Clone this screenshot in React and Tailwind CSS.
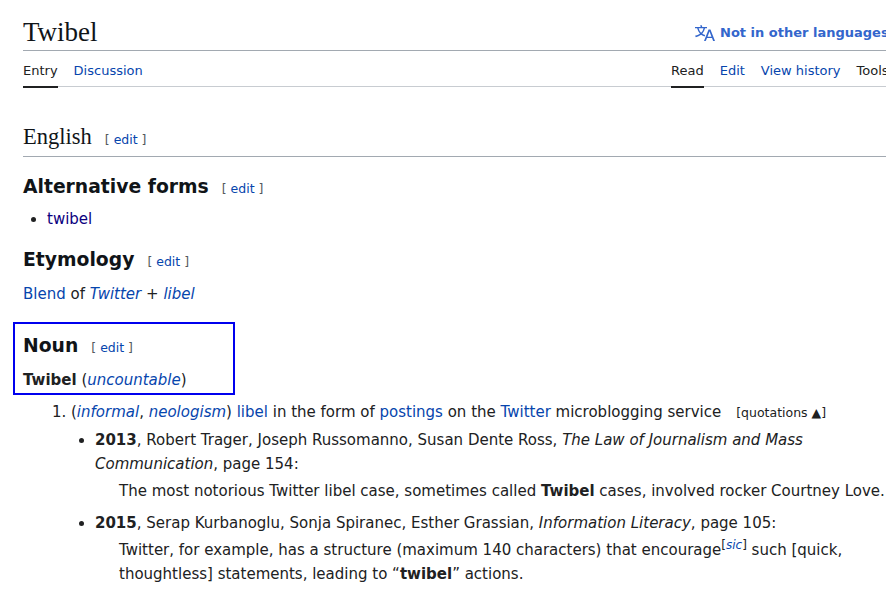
import React from "react";

const A = ({ children, className = "" }) => (
  <a href="#" className={`text-[#0645ad] ${className}`}>{children}</a>
);

const EditLink = () => (
  <span className="text-[12.5px] font-normal text-[#54595d] ml-[13px]">
    [ <A>edit</A> ]
  </span>
);

const Tab = ({ active, children }) => (
  <div className={`h-[37px] pt-[8px] text-[13px] ${active ? "border-b-2 border-[#202122] text-[#202122]" : "text-[#0645ad]"}`}>
    {children}
  </div>
);

const App = () => {
  return (
    <div className="w-[886px] h-[609px] overflow-hidden bg-white text-[#202122] pl-[23px] text-[15px] leading-[24px]" style={{ fontFamily: '"DejaVu Sans", sans-serif' }}>
      <div className="w-[900px]">
        <div className="flex justify-between items-center h-[51px] border-b border-[#a2a9b1] pt-[14px]">
          <h1 className="text-[27px] leading-[38px] text-[#101418]" style={{ fontFamily: '"Liberation Serif", serif' }}>Twibel</h1>
          <div className="flex items-center gap-[5px] text-[13px] font-bold text-[#3366cc] w-[228px] whitespace-nowrap mt-[1px]">
            <svg width="20" height="20" viewBox="0 0 20 20" fill="#3366cc">
              <path d="M20 18h-1.44a.6.6 0 0 1-.4-.12.8.8 0 0 1-.23-.31L17 15h-5l-1 2.54a.8.8 0 0 1-.22.3.6.6 0 0 1-.4.14H9l4.55-11.47h1.89zm-3.53-4.31L14.89 9.5a12 12 0 0 1-.39-1.24q-.09.37-.19.69l-.19.56-1.58 4.19zm-6.3-1.58a13.4 13.4 0 0 1-2.91-1.41 11.46 11.46 0 0 0 2.81-5.37H12V4H7.31a4 4 0 0 0-.2-.56C6.87 2.79 6.6 2 6.6 2l-1.47.5s.4.89.6 1.5H0v1.33h2.15A11.23 11.23 0 0 0 5 10.7a17.2 17.2 0 0 1-5 2.1q.56.82.87 1.38a23.3 23.3 0 0 0 5.22-2.51 15.6 15.6 0 0 0 3.56 1.77zM3.63 5.33h4.91a8.1 8.1 0 0 1-2.45 4.45 9.1 9.1 0 0 1-2.46-4.45" />
            </svg>
            <span>Not in other languages</span>
          </div>
        </div>
        <div className="flex justify-between h-[36px] border-b border-[#c8ccd1]">
          <div className="flex gap-[16px]">
            <Tab active>Entry</Tab>
            <Tab>Discussion</Tab>
          </div>
          <div className="flex gap-[16px] w-[252px] whitespace-nowrap">
            <Tab active>Read</Tab>
            <Tab>Edit</Tab>
            <Tab>View history</Tab>
            <div className="h-[37px] pt-[8px] text-[13px] text-[#202122]">Tools</div>
          </div>
        </div>

        <div className="mt-[34px] h-[36px] border-b border-[#a2a9b1] flex items-baseline">
          <h2 className="text-[22.5px] leading-[32px] text-[#101418]" style={{ fontFamily: '"Liberation Serif", serif' }}>English</h2>
          <EditLink />
        </div>

        <div className="mt-[16px] flex items-baseline h-[28px]">
          <h3 className="text-[18.75px] font-bold text-[#101418] leading-[28px]">Alternative forms</h3>
          <EditLink />
        </div>
        <ul className="mt-[6px] ml-[24px] list-disc">
          <li><a href="#" className="text-[#0b0080]">twibel</a></li>
        </ul>

        <div className="mt-[15px] flex items-baseline h-[28px]">
          <h3 className="text-[18.75px] font-bold text-[#101418] leading-[28px]">Etymology</h3>
          <EditLink />
        </div>
        <p className="mt-[8px]">
          <A>Blend</A> of <A className="italic">Twitter</A> + <A className="italic">libel</A>
        </p>
      </div>

      <div className="relative w-[900px] mt-[26px]">
        <div className="absolute left-[-10px] top-[-10px] w-[222px] h-[73px] border-2 border-[#0000ee]" />
        <div className="flex items-baseline h-[28px]">
          <h3 className="text-[18.75px] font-bold text-[#101418] leading-[28px]">Noun</h3>
          <EditLink />
        </div>
        <p className="mt-[8px]">
          <b>Twibel</b> (<A className="italic">uncountable</A>)
        </p>
        <ol className="list-decimal ml-[48px] mt-[8px]">
          <li>
            <span>(<A className="italic">informal</A>, <A className="italic">neologism</A>) <A>libel</A> in the form of <A>postings</A> on the <A>Twitter</A> microblogging service</span>
            <span className="ml-[15px] text-[12.5px]">[quotations ▲]</span>
            <ul className="list-disc ml-[24px] mt-[3px]">
              <li className="w-[730px]">
                <b>2013</b>, Robert Trager, Joseph Russomanno, Susan Dente Ross, <i>The Law of Journalism and Mass Communication</i>, page 154:
                <div className="ml-[24px] mt-[3px] whitespace-nowrap">The most notorious Twitter libel case, sometimes called <b>Twibel</b> cases, involved rocker Courtney Love.</div>
              </li>
              <li className="w-[750px] mt-[8px]">
                <b>2015</b>, Serap Kurbanoglu, Sonja Spiranec, Esther Grassian, <i>Information Literacy</i>, page 105:
                <div className="ml-[24px] mt-[3px]">
                  Twitter, for example, has a structure (maximum 140 characters) that encourage<sup className="text-[12px]">[<A className="italic">sic</A>]</sup> such [quick, thoughtless] statements, leading to “<b>twibel</b>” actions.
                </div>
              </li>
            </ul>
          </li>
        </ol>
      </div>
    </div>
  );
};

export default App;
